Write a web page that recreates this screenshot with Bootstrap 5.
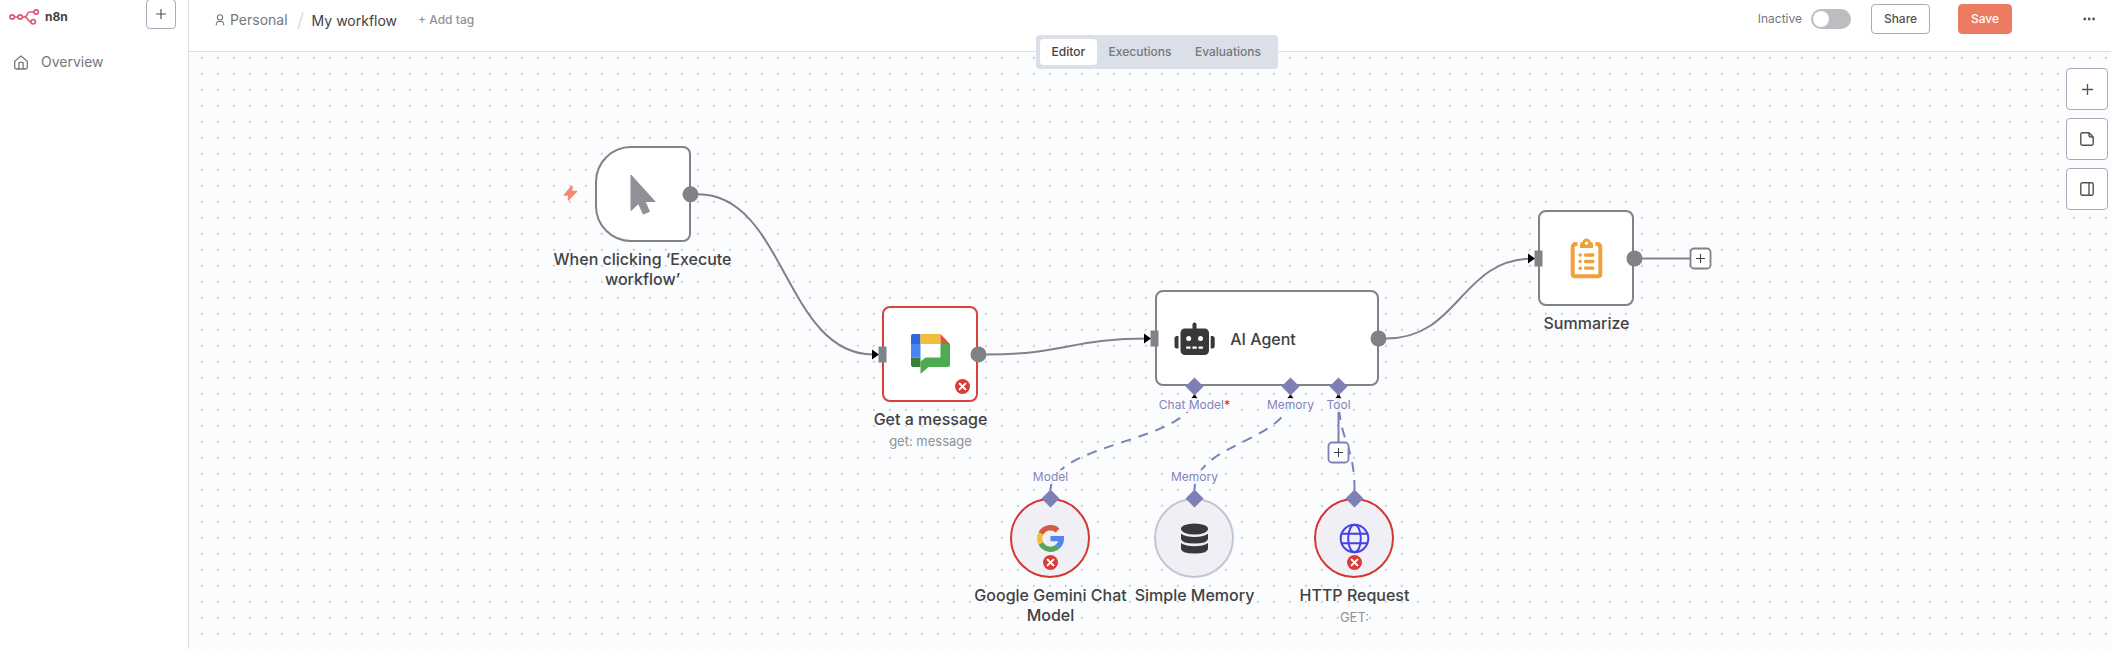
<!DOCTYPE html>
<html lang="en">
<head>
<meta charset="utf-8">
<title>My workflow - n8n</title>
<meta name="viewport" content="width=device-width, initial-scale=1">
<link href="https://cdn.jsdelivr.net/npm/bootstrap@5.3.0/dist/css/bootstrap.min.css" rel="stylesheet">
<style>
body{font-family:Inter,"Noto Sans",sans-serif;font-size:14px;line-height:20px;color:#414244;background:#fff;overflow:hidden}
svg{display:block;flex:none}
.side{width:189px;border-right:1px solid #dbdfe7}
.topbar{height:52px;border-bottom:1px solid #dbdfe7;padding:0 15px 14px 26px}
.brand{font-weight:700;font-size:12px;color:#414244;line-height:16px}
.sq{width:30px;height:30px;border:1px solid #a8abb8;border-radius:4px;background:#fff;padding:0;color:#525356}
.soft{color:#75777d}
.tagbtn{font-size:12px;font-weight:500;color:#919298}
.hbtn{--bs-btn-font-size:12px;--bs-btn-font-weight:500;--bs-btn-padding-x:0;--bs-btn-padding-y:0;--bs-btn-border-radius:4px;height:30px;line-height:28px}
.share{width:59px;border-color:#a8abb8;color:#525356;background:#fff}
.save{width:54px;background:#ed7b61;border-color:#ed7b61;color:#fff}
.toggle{width:40px;height:20px;border-radius:10px;background:#bcbdc1;padding:2px}
.toggle i{width:16px;height:16px;border-radius:50%;background:#fff}
.modes{left:1036px;top:35px;height:34px;width:242px;background:#dbdfe7;border-radius:4px;padding:4px;z-index:5}
.modes .nav-link{font-size:12px;font-weight:450;line-height:26px;padding:0 12px 0 11.500px;color:#75777d;border-radius:4px}
.modes .nav-link.active{background:#fff;color:#414244}
.board{background-color:#fbfcfe;background-image:radial-gradient(circle at 8px 8px,#adafb5 0,#adafb5 .5px,transparent 1.050px);background-size:16px 16px;background-position:4.900px -2.200px;overflow:hidden}
.plane{left:-189px;top:-52px;width:2111px;height:649px}
.tools{top:16px;right:3px;gap:8px}
.tools button{width:42px;height:42px}
.nodebox{position:absolute;width:96px;height:96px;border:2px solid #818288;border-radius:8px;background:#fff}
.trigger{border-radius:36px 8px 8px 36px}
.bad{border-color:#d7433c}
.round{width:80px;height:80px;border-radius:50%;background:#efeff5;border-color:#c3c5d4}
.round.bad{border-color:#d7352e}
.caption{position:absolute;width:190px;transform:translateX(-50%);text-align:center;font-size:16px;line-height:20px;font-weight:450;color:#414244}
.caption div{font-size:13px;font-weight:400;color:#909298;line-height:20px}
.port{position:absolute;transform:translate(-50%,-50%);font-size:12px;line-height:14px;color:#8384b8;background:rgba(251,252,254,.85);white-space:nowrap}
.port b{color:#ea1f30;font-weight:500}
.over{left:0;top:0;pointer-events:none}
</style>
</head>
<body>
<div class="d-flex vh-100">
  <aside class="side flex-shrink-0 bg-white">
    <div class="d-flex align-items-start justify-content-between" style="padding:0 12px 0 9px">
      <div class="d-flex align-items-center" style="gap:5px;padding-top:8px">
        <svg width="31" height="17" viewBox="0 0 31 17" fill="none" stroke="#dd5873" stroke-width="1.7"><circle cx="3.2" cy="9" r="2.2"/><circle cx="11.2" cy="9" r="2.2"/><circle cx="27.2" cy="4" r="2.2"/><circle cx="24.2" cy="13.8" r="2.2"/><path d="M5.4 9H9M13.4 9h1.8c3.8 0 2-5 5.600-5H25M15.500 9c4 0 2.500 4.800 6.500 4.800"/></svg>
        <span class="brand">n8n</span>
      </div>
      <button class="sq d-flex align-items-center justify-content-center" style="margin-top:-1px"><svg width="10" height="10" viewBox="0 0 10 10" stroke="currentColor" stroke-width="1.2"><path d="M0 5h10M5 0v10"/></svg></button>
    </div>
    <div class="d-flex align-items-center soft" style="padding:23px 0 0 14px;gap:13px">
      <svg width="14" height="15" viewBox="0 0 14 15" fill="none" stroke="currentColor" stroke-width="1.3" stroke-linejoin="round"><path d="M.7 6.200 7 .9l6.300 5.300V12.300a1.700 1.700 0 0 1-1.700 1.700H2.400A1.700 1.700 0 0 1 .7 12.300ZM4.900 14V8.200q0-.8.8-.8h2.600q.8 0 .8.800V14"/></svg>
      <span>Overview</span>
    </div>
  </aside>
  <main class="flex-grow-1 d-flex flex-column position-relative" style="min-width:0">
    <header class="topbar d-flex align-items-center flex-shrink-0 bg-white">
      <svg style="margin-top:2px" width="10" height="12" viewBox="0 0 10 12" fill="none" stroke="#75777d" stroke-width="1.100" stroke-linecap="round"><circle cx="5" cy="3.400" r="2.600"/><path d="M1.300 11V9.500A2.500 2.500 0 0 1 3.800 7.500H6.200A2.500 2.500 0 0 1 8.700 9.500V11"/></svg>
      <span class="soft" style="margin:3px 0 0 5px">Personal</span>
      <svg class="mt-1" style="margin-left:9px" width="7" height="18" viewBox="0 0 7 18" stroke="#d3d6e0" stroke-width="1.300"><path d="M6 .5 1 17"/></svg>
      <span style="margin:4px 0 0 8px">My workflow</span>
      <span class="tagbtn" style="margin:2px 0 0 21px">+ Add tag</span>
      <div class="ms-auto d-flex align-items-center">
        <span class="soft" style="font-size:12px;margin-right:9px;padding-top:1px">Inactive</span>
        <div class="toggle d-flex"><i></i></div>
        <button class="btn hbtn share" style="margin-left:20px">Share</button>
        <button class="btn hbtn save" style="margin-left:28px">Save</button>
        <svg style="margin-left:71px" width="13" height="4" fill="#525356"><circle cx="1.800" cy="2" r="1.400"/><circle cx="6.200" cy="2" r="1.400"/><circle cx="10.600" cy="2" r="1.400"/></svg>
      </div>
    </header>
    <nav class="nav modes position-absolute flex-nowrap" style="margin-left:-189px">
      <a class="nav-link active">Editor</a><a class="nav-link">Executions</a><a class="nav-link">Evaluations</a>
    </nav>
    <section class="board flex-grow-1 position-relative">
      <div class="plane position-absolute">
        <svg class="position-absolute over" width="2111" height="649" fill="none" stroke-width="2">
          <g stroke="#818288">
            <path d="M698 194.300C785 194.300 785 354.400 873 354.400"/>
            <path d="M986 354.400C1068 354.400 1068 338.500 1150 338.500"/>
            <path d="M1386 338.500C1460 338.500 1460 258.500 1534 258.500"/>
            <path d="M1642 258.500H1690"/>
          </g>
          <g stroke="#7e80b5">
            <g stroke-dasharray="10 8">
              <path d="M1050.500 490C1050.500 442 1194.500 442 1194.500 395"/>
              <path d="M1194.500 490C1194.500 442 1290.500 442 1290.500 395"/>
              <path d="M1354.500 490C1354.500 442 1338.500 442 1338.500 395"/>
            </g>
            <path d="M1338.500 393V442"/>
          </g>
          <path fill="#000" d="M872 349.400v10l7-5ZM1144 333.500v10l7-5ZM1528 253.500v10l7-5ZM1191 399h7l-3.500-5ZM1287 399h7l-3.500-5ZM1335 399h7l-3.500-5Z"/>
        </svg>

        <div class="nodebox trigger" style="left:594.500px;top:146.400px"></div>
        <div class="nodebox bad" style="left:882.400px;top:306.400px"></div>
        <div class="nodebox" style="left:1154.500px;top:290.400px;width:224px"></div>
        <div class="nodebox" style="left:1538.400px;top:210.400px"></div>
        <div class="nodebox round bad" style="left:1010.400px;top:498.400px"></div>
        <div class="nodebox round" style="left:1154.400px;top:498.400px"></div>
        <div class="nodebox round bad" style="left:1314.400px;top:498.400px"></div>

        <div class="port" style="left:1194.500px;top:405px">Chat Model<b>*</b></div>
        <div class="port" style="left:1290.500px;top:405px">Memory</div>
        <div class="port" style="left:1338.500px;top:405px">Tool</div>
        <div class="port" style="left:1050.500px;top:477px">Model</div>
        <div class="port" style="left:1194.500px;top:477px">Memory</div>

        <div class="caption" style="left:642.500px;top:249px">When clicking ‘Execute workflow’</div>
        <div class="caption" style="left:930.500px;top:409px">Get a message<div style="margin-top:2px">get: message</div></div>
        <div class="caption" style="left:1263px;top:329px">AI Agent</div>
        <div class="caption" style="left:1586.500px;top:313px">Summarize</div>
        <div class="caption" style="left:1050.500px;top:585px;width:160px">Google Gemini Chat Model</div>
        <div class="caption" style="left:1194.500px;top:585px">Simple Memory</div>
        <div class="caption" style="left:1354.500px;top:585px">HTTP Request<div style="margin-top:2px">GET:</div></div>

        <svg class="position-absolute over" width="2111" height="649">
          <defs>
            <path id="dia" d="M0-9 9 0 0 9-9 0Z" fill="#7e80b5"/>
            <g id="err"><circle r="7.500" fill="#d63e38"/><path d="M-2.700-2.700 2.700 2.700M2.700-2.700-2.700 2.700" stroke="#fff" stroke-width="2" stroke-linecap="square"/></g>
          </defs>
          <g fill="#818288">
            <circle cx="690.500" cy="194.300" r="8"/><circle cx="978.500" cy="354.400" r="8"/><circle cx="1378.500" cy="338.500" r="8"/><circle cx="1634.500" cy="258.500" r="8"/>
            <path d="M878.500 346.400h8v16h-8ZM1150.500 330.500h8v16h-8ZM1534.500 250.500h8v16h-8Z"/>
          </g>
          <use href="#dia" x="1194.500" y="386.500"/><use href="#dia" x="1290.500" y="386.500"/><use href="#dia" x="1338.500" y="386.500"/>
          <use href="#dia" x="1050.500" y="498.500"/><use href="#dia" x="1194.500" y="498.500"/><use href="#dia" x="1354.500" y="498.500"/>
          <g fill="#fff" stroke-width="1.800">
            <rect x="1328.500" y="442.500" width="20" height="20" rx="3.500" stroke="#7e80b5"/><rect x="1690.500" y="248.500" width="20" height="20" rx="3.500" stroke="#818288"/>
          </g>
          <path d="M1334 452.500h9M1338.500 448v9M1696 258.500h9M1700.500 254v9" stroke="#414244" stroke-width="1.100"/>
          <!-- trigger bolt -->
          <path d="M571.700 186.500 564.300 195h4.700l-.8 5 8.300-8.500h-5.200l1-5Z" fill="#f08a70" stroke="#f08a70" stroke-width="1.300" stroke-linejoin="round"/>
          <!-- cursor -->
          <path d="M631 175v35.500l7.500-7 4.700 10.500 6.200-2.500-4.300-10h9.900Z" fill="#909196" stroke="#909196" stroke-linejoin="round"/>
          <!-- chat logo -->
          <path fill="#3367d6" d="M913 334h7.500v10H911v-8q0-2 2-2Z"/><path fill="#f1be3a" d="M920.500 334h20v10h-20Z"/><path fill="#d9553f" d="m940.500 334 9.500 10h-9.500Z"/><path fill="#4c83f7" d="M911 344h9.500v13.500H911Z"/><path fill="#36803a" d="M911 357.500h9.500v9.500H913q-2 0-2-2Z"/><path fill="#4fab52" d="M940.500 344h9.500v21q0 2-2 2h-19.500l-8 7v-12.500l5-4h15Z"/>
          <use href="#err" x="962.500" y="386.500"/>
          <!-- robot -->
          <g fill="#37383a"><rect x="1180.500" y="328.500" width="28.500" height="26.500" rx="4.500"/><rect x="1192.500" y="322.500" width="4" height="9" rx="2"/><path d="M1178.500 336v12.500h-1.500q-2.500 0-2.500-2.500v-7.500q0-2.500 2.500-2.500ZM1210.700 336v12.500h1.500q2.500 0 2.500-2.500v-7.500q0-2.500-2.500-2.500Z"/></g>
          <path fill="#fff" d="M1186.200 346.500h4.300v2.300h-4.300ZM1192.400 346.500h4.300v2.300h-4.300ZM1198.600 346.500h4.300v2.300h-4.300Z"/><circle cx="1188.700" cy="338.500" r="2.500" fill="#fff"/><circle cx="1200.500" cy="338.500" r="2.500" fill="#fff"/>
          <!-- clipboard -->
          <g fill="none" stroke="#f0a03b" stroke-width="4"><path d="M1577.500 244h-1.500q-3.300 0-3.300 3.500v26.500q0 2.300 2.500 2.300h22.600q2.500 0 2.500-2.300v-26.500q0-3.500-3.300-3.500h-1.500"/><path d="M1585.500 255h7.500M1585.500 261.500h7.500M1585.500 268.200h7.500" stroke-width="3.300" stroke-linecap="round"/></g>
          <g fill="#f0a03b"><circle cx="1580.200" cy="255" r="1.800"/><circle cx="1580.200" cy="261.500" r="1.800"/><circle cx="1580.200" cy="268.200" r="1.800"/><path d="M1580 248v-4q0-2 2.500-2 .5-3.500 4-3.500t4 3.500q2.500 0 2.500 2v4Z"/></g><circle cx="1586.500" cy="243.200" r="1.600" fill="#fff"/>
          <!-- google -->
          <g fill="none" stroke-width="5.300"><path stroke="#d75840" d="M1057.600 530.400A10.900 10.900 0 0 0 1040.900 533.500"/><path stroke="#f1be3a" d="M1040.900 533.500A10.900 10.900 0 0 0 1040.900 543.500"/><path stroke="#58a55c" d="M1040.900 543.500A10.900 10.900 0 0 0 1057.800 546.500"/><path stroke="#5484ee" d="M1057.800 546.500A10.900 10.900 0 0 0 1061.400 538.600H1050.500"/></g>
          <use href="#err" x="1050.500" y="562.500"/>
          <!-- database -->
          <g fill="#37383a"><ellipse cx="1194.500" cy="529" rx="13.500" ry="5.500"/><path d="M1181 533.800q5 3.300 13.500 3.300t13.500-3.300v5.200q-1 4.500-13.500 4.500t-13.500-4.500ZM1181 543q5 3.300 13.500 3.300t13.500-3.300v6q-1 4.500-13.500 4.500t-13.500-4.500Z"/></g>
          <!-- globe -->
          <g fill="none" stroke="#4242e8" stroke-width="2"><circle cx="1354.500" cy="538.500" r="13.800"/><ellipse cx="1354.500" cy="538.500" rx="6.300" ry="13.800"/><path d="M1342 533.700h25M1342 543.300h25"/></g>
          <use href="#err" x="1354.500" y="562.500"/>
        </svg>
      </div>
      <div class="tools position-absolute d-flex flex-column">
        <button class="sq d-flex align-items-center justify-content-center"><svg width="11" height="11" viewBox="0 0 11 11" stroke="currentColor" stroke-width="1.300"><path d="M0 5.500h11M5.500 0v11"/></svg></button>
        <button class="sq d-flex align-items-center justify-content-center"><svg width="14" height="14" viewBox="0 0 14 14" fill="none" stroke="currentColor" stroke-width="1.400" stroke-linejoin="round"><path d="M9 .8H2.200Q.8.800.8 2.200v9.600q0 1.400 1.400 1.400h9.600q1.400 0 1.400-1.400V5ZM9 .8v2.800Q9 5 10.400 5h2.800"/></svg></button>
        <button class="sq d-flex align-items-center justify-content-center"><svg width="14" height="14" viewBox="0 0 14 14" fill="none" stroke="currentColor" stroke-width="1.400"><rect x=".8" y=".8" width="12.400" height="12.400" rx="1.400"/><path d="M9 1v12"/></svg></button>
      </div>
    </section>
  </main>
</div>
<script src="https://cdn.jsdelivr.net/npm/bootstrap@5.3.0/dist/js/bootstrap.bundle.min.js"></script>
</body>
</html>
